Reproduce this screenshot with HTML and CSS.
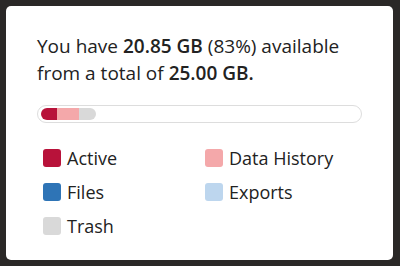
FILE: index.html
```html
<!DOCTYPE html>
<html>
<head>
<meta charset="utf-8">
<link rel="stylesheet" href="styles.css">
</head>
<body>
<div class="card">
  <p class="summary">You have <b>20.85 GB</b> (83%) available from a total of <b>25.00 GB.</b></p>
  <div class="bar">
    <div class="fill">
      <span class="seg active" style="width:16px"></span>
      <span class="seg history" style="width:22px"></span>
      <span class="seg trash" style="width:17px"></span>
    </div>
  </div>
  <div class="legend">
    <div class="item"><span class="sw active"></span>Active</div>
    <div class="item"><span class="sw history"></span>Data History</div>
    <div class="item"><span class="sw files"></span>Files</div>
    <div class="item"><span class="sw exports"></span>Exports</div>
    <div class="item"><span class="sw trash"></span>Trash</div>
  </div>
</div>
</body>
</html>
```
FILE: styles.css
```css
html, body { margin: 0; padding: 0; }
body {
  background: #2a2827;
  width: 400px;
  height: 266px;
  padding: 6px 0 0 6px;
  box-sizing: border-box;
  font-family: "Open Sans", "Liberation Sans", sans-serif;
  color: #222;
}
.card {
  background: #fff;
  width: 387px;
  height: 254px;
  border-radius: 5px;
  box-sizing: border-box;
  padding: 27px 20px 0 31px;
}
.summary {
  margin: 0;
  font-size: 19px;
  line-height: 27px;
  width: 330px;
}
.summary b { font-weight: 600; }
.bar {
  margin-top: 18px;
  width: 325px;
  height: 18px;
  box-sizing: border-box;
  border: 1px solid #ddd;
  border-radius: 9px;
  padding: 2px 3px;
}
.fill {
  display: flex;
  height: 12px;
  border-radius: 6px;
  overflow: hidden;
  width: max-content;
}
.seg { display: block; height: 100%; }
.active { background: #b8123a; }
.history { background: #f4a8aa; }
.files { background: #2e74b6; }
.exports { background: #bdd6ee; }
.trash { background: #d9d9d9; }
.legend {
  margin-top: 25px;
  margin-left: 6px;
  display: grid;
  grid-template-columns: 162px 1fr;
  row-gap: 14px;
}
.item {
  display: flex;
  align-items: center;
  gap: 6px;
  font-size: 18px;
  line-height: 20px;
}
.sw {
  width: 18px;
  height: 18px;
  border-radius: 3px;
  flex: none;
}
```
